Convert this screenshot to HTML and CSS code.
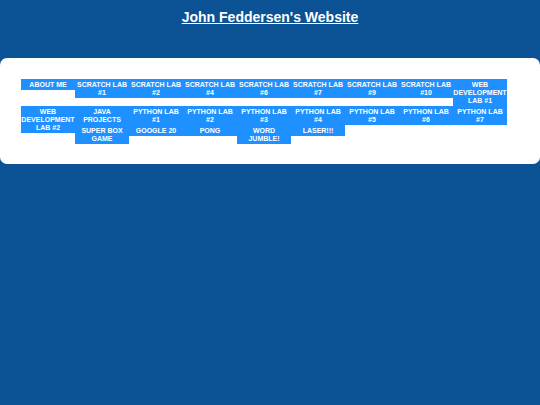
FILE: index.html
```html
<!DOCTYPE html>
<html lang="en">
<head>
  <meta charset="UTF-8">
  <meta name="viewport" content="width=device-width, initial-scale=1.0">
  <title>John Feddersen's Website</title>
  <link rel="stylesheet" href="styles.css">
</head>
<body>
  <header>
    <h1>John Feddersen's Website</h1>
  </header>

  <nav class="menu">
    <ul>
      <li><a href="#">About Me</a></li>
      <li><a href="#">Scratch Lab #1</a></li>
      <li><a href="#">Scratch Lab #2</a></li>
      <li><a href="#">Scratch Lab #4</a></li>
      <li><a href="#">Scratch Lab #6</a></li>
      <li><a href="#">Scratch Lab #7</a></li>
      <li><a href="#">Scratch Lab #9</a></li>
      <li><a href="#">Scratch Lab #10</a></li>
      <li><a href="#">Web Development Lab #1</a></li>
      <li><a href="#">Web Development Lab #2</a></li>
      <li><a href="#">Java Projects</a></li>
      <li><a href="#">Python Lab #1</a></li>
      <li><a href="#">Python Lab #2</a></li>
      <li><a href="#">Python Lab #3</a></li>
      <li><a href="#">Python Lab #4</a></li>
      <li><a href="#">Python Lab #5</a></li>
      <li><a href="#">Python Lab #6</a></li>
      <li><a href="#">Python Lab #7</a></li>
      <li><a href="#">Super Box Game</a></li>
      <li><a href="#">Google 20</a></li>
      <li><a href="#">Pong</a></li>
      <li><a href="#">Word Jumble!</a></li>
      <li><a href="#">Laser!!!</a></li>
    </ul>
  </nav>
</body>
</html>
```

FILE: styles.css
```css
body {
  margin: 0;
  background-color: #0b5394;
  font-family: "Liberation Sans", Arial, sans-serif;
}
header {
  padding: 8px 0;
  margin-bottom: 24px;
  text-align: center;
}
h1 {
  margin: 0;
  font-size: 14px;
  line-height: 18px;
  color: #fff;
  text-decoration: underline;
}
.menu {
  padding: 21px 21px 20px;
  background-color: #fff;
  border-radius: 7px;
}
.menu ul {
  list-style: none;
  margin: 0;
  padding: 0;
  overflow: hidden;
}
.menu li {
  float: left;
}
.menu a {
  display: block;
  width: 54px;
  padding: 2px 0 1px;
  background-color: #1e90ff;
  color: #fff;
  font-size: 7px;
  font-weight: bold;
  line-height: 8px;
  text-align: center;
  text-decoration: none;
  text-transform: uppercase;
}
.menu a:hover {
  background-color: #0b5394;
}
```
